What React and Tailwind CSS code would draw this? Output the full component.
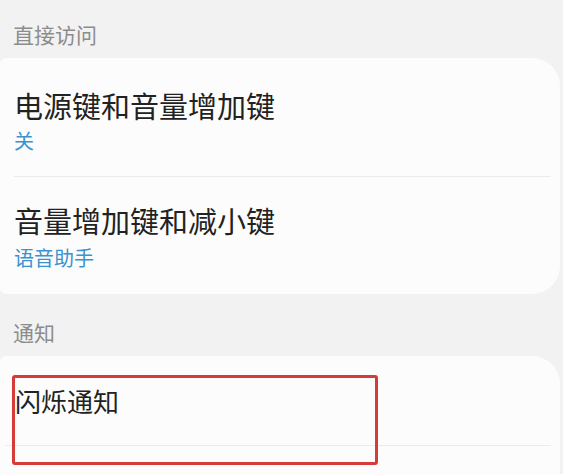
import React from "react";

const font = { fontFamily: '"Noto Sans CJK SC", "Noto Sans", sans-serif' };

const SectionHeader = ({ children, className = "" }) => (
  <div className={`px-[13px] text-[21px] leading-[26px] text-[#8c8c8c] ${className}`}>{children}</div>
);

const Divider = () => <div className="ml-[14px] mr-[9px] h-px bg-[#ebebeb]" />;

const App = () => {
  return (
    <div
      className="w-[563px] h-[474px] overflow-hidden bg-[#f2f2f2] antialiased"
      style={font}
    >
      {/* 直接访问 */}
      <SectionHeader className="pt-[21px] h-[58px]">直接访问</SectionHeader>
      <div className="mr-[3px] bg-[#fcfcfc] rounded-r-[28px] rounded-l-[6px]">
        <div className="px-[14px] pt-[30px] pb-[23px]">
          <div className="text-[29px] leading-[34px] text-[#222]">电源键和音量增加键</div>
          <div className="mt-[6px] text-[20px] leading-[25px] text-[#3a92cf]">关</div>
        </div>
        <Divider />
        <div className="px-[14px] pt-[26px] pb-[24px]">
          <div className="text-[29px] leading-[34px] text-[#222]">音量增加键和减小键</div>
          <div className="mt-[8px] text-[20px] leading-[25px] text-[#3a92cf]">语音助手</div>
        </div>
      </div>

      {/* 通知 */}
      <SectionHeader className="pt-[25px] pb-[11px]">通知</SectionHeader>
      <div className="relative mr-[3px] h-[140px] bg-[#fcfcfc] rounded-tr-[28px] rounded-tl-[6px]">
        <div className="px-[15px] pt-[28px] pb-[27px]">
          <div className="text-[26px] leading-[34px] text-[#222]">闪烁通知</div>
        </div>
        <div className="ml-[5px] mr-[9px] h-px bg-[#ebebeb]" />
        {/* annotation box */}
        <div className="absolute left-[12px] top-[19px] w-[366px] h-[90px] border-[3px] border-[#d83a3a] rounded-[3px]" />
      </div>
    </div>
  );
};

export default App;
